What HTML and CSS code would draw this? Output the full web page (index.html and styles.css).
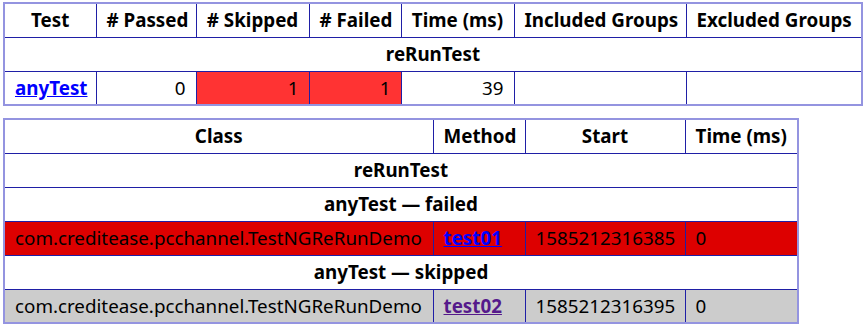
FILE: index.html
```html
<!DOCTYPE html>
<html>
<head>
<meta charset="utf-8">
<link rel="stylesheet" href="styles.css">
</head>
<body>
<table class="summary">
  <colgroup>
    <col class="c-test"><col class="c-pass"><col class="c-skip"><col class="c-fail"><col class="c-time"><col class="c-inc"><col class="c-exc">
  </colgroup>
  <tr>
    <th>Test</th><th># Passed</th><th># Skipped</th><th># Failed</th><th>Time (ms)</th><th>Included Groups</th><th>Excluded Groups</th>
  </tr>
  <tr><th colspan="7">reRunTest</th></tr>
  <tr>
    <td><a href="#t0">anyTest</a></td>
    <td class="num">0</td>
    <td class="num attn">1</td>
    <td class="num attn">1</td>
    <td class="num">39</td>
    <td></td>
    <td></td>
  </tr>
</table>
<table class="detail">
  <colgroup>
    <col class="c-class"><col class="c-method"><col class="c-start"><col class="c-dur">
  </colgroup>
  <tr><th>Class</th><th>Method</th><th>Start</th><th>Time (ms)</th></tr>
  <tr><th colspan="4">reRunTest</th></tr>
  <tr><th colspan="4">anyTest — failed</th></tr>
  <tr class="failedeven">
    <td>com.creditease.pcchannel.TestNGReRunDemo</td>
    <td><a href="#m0">test01</a></td>
    <td>1585212316385</td>
    <td>0</td>
  </tr>
  <tr><th colspan="4">anyTest — skipped</th></tr>
  <tr class="skippedeven">
    <td>com.creditease.pcchannel.TestNGReRunDemo</td>
    <td><a class="visited" href="#m1">test02</a></td>
    <td>1585212316395</td>
    <td>0</td>
  </tr>
</table>
</body>
</html>
```

FILE: styles.css
```css
body {
  margin: 0;
  padding: 2px 0 0 3px;
  font-family: "Noto Sans", "Open Sans", sans-serif;
  font-size: 18.8px;
  color: #000;
  background: #fff;
}
table {
  border-collapse: collapse;
  table-layout: fixed;
  border: 2px solid #9494e0;
  margin-bottom: 12px;
}
.summary { width: 860px; }
.detail { width: 796px; }
tr { height: 34px; }
th, td {
  border: 1px solid #1f1fa6;
  padding: 0 10px;
  vertical-align: middle;
  white-space: nowrap;
  overflow: hidden;
}
th { font-weight: bold; text-align: center; }
td { text-align: left; }
.num { text-align: right; }
.attn { background-color: #f33; }
.failedeven td { background-color: #d00; }
.skippedeven td { background-color: #ccc; }
a { color: #00f; font-weight: bold; text-decoration: underline; }
a.visited { color: #551a8b; }
.c-test { width: 92px; }
.c-pass { width: 100px; }
.c-skip { width: 113px; }
.c-fail { width: 92px; }
.c-time { width: 113px; }
.c-inc { width: 172px; }
.c-exc { width: 176px; }
.c-class { width: 429px; }
.c-method { width: 92px; }
.c-start { width: 160px; }
.c-dur { width: 113px; }
```
